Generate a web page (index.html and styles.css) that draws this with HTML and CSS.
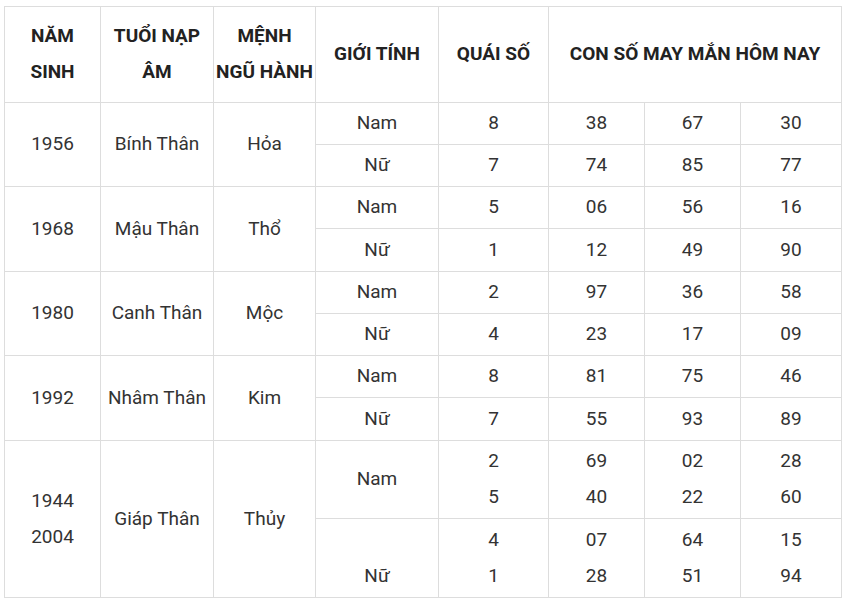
FILE: index.html
```html
<!DOCTYPE html>
<html lang="vi">
<head>
<meta charset="utf-8">
<title>Con số may mắn</title>
<link rel="stylesheet" href="styles.css">
</head>
<body>
<table class="luck">
  <colgroup>
    <col class="c1"><col class="c2"><col class="c3"><col class="c4"><col class="c5"><col class="c6"><col class="c7"><col class="c8">
  </colgroup>
  <thead>
    <tr class="head">
      <th>NĂM<br>SINH</th>
      <th>TUỔI NẠP<br>ÂM</th>
      <th>MỆNH<br>NGŨ HÀNH</th>
      <th>GIỚI TÍNH</th>
      <th>QUÁI SỐ</th>
      <th colspan="3">CON SỐ MAY MẮN HÔM NAY</th>
    </tr>
  </thead>
  <tbody>
    <tr class="r42"><td rowspan="2">1956</td><td rowspan="2">Bính Thân</td><td rowspan="2">Hỏa</td><td>Nam</td><td>8</td><td>38</td><td>67</td><td>30</td></tr>
    <tr class="r42"><td>Nữ</td><td>7</td><td>74</td><td>85</td><td>77</td></tr>
    <tr class="r42"><td rowspan="2">1968</td><td rowspan="2">Mậu Thân</td><td rowspan="2">Thổ</td><td>Nam</td><td>5</td><td>06</td><td>56</td><td>16</td></tr>
    <tr class="r43"><td>Nữ</td><td>1</td><td>12</td><td>49</td><td>90</td></tr>
    <tr class="r42"><td rowspan="2">1980</td><td rowspan="2">Canh Thân</td><td rowspan="2">Mộc</td><td>Nam</td><td>2</td><td>97</td><td>36</td><td>58</td></tr>
    <tr class="r42"><td>Nữ</td><td>4</td><td>23</td><td>17</td><td>09</td></tr>
    <tr class="r42"><td rowspan="2">1992</td><td rowspan="2">Nhâm Thân</td><td rowspan="2">Kim</td><td>Nam</td><td>8</td><td>81</td><td>75</td><td>46</td></tr>
    <tr class="r43"><td>Nữ</td><td>7</td><td>55</td><td>93</td><td>89</td></tr>
    <tr class="r78"><td rowspan="2">1944<br>2004</td><td rowspan="2">Giáp Thân</td><td rowspan="2">Thủy</td><td>Nam</td><td>2<br>5</td><td>69<br>40</td><td>02<br>22</td><td>28<br>60</td></tr>
    <tr class="r79"><td><br>Nữ</td><td>4<br>1</td><td>07<br>28</td><td>64<br>51</td><td>15<br>94</td></tr>
  </tbody>
</table>
</body>
</html>
```

FILE: styles.css
```css
html, body {
  margin: 0;
  padding: 0;
  background: #ffffff;
}
body {
  padding: 6px 0 0 4px;
  font-family: Roboto, "Noto Sans", "Liberation Sans", sans-serif;
  color: #333333;
}
.luck {
  border-collapse: collapse;
  table-layout: fixed;
  width: 837px;
  font-size: 19px;
  line-height: 36px;
}
.c1 { width: 96px; }
.c2 { width: 113px; }
.c3 { width: 102px; }
.c4 { width: 123px; }
.c5 { width: 110px; }
.c6 { width: 96px; }
.c7 { width: 96px; }
.c8 { width: 101px; }
.luck th,
.luck td {
  border: 1px solid #dddddd;
  padding: 0;
  text-align: center;
  vertical-align: middle;
  white-space: nowrap;
}
.luck th {
  font-weight: 700;
  color: #222222;
}
.luck td {
  padding-bottom: 1px;
}
.head th {
  padding-bottom: 2px;
}
.head { height: 96px; }
.r42 { height: 42px; }
.r43 { height: 43px; }
.r78 { height: 78px; }
.r79 { height: 79px; }
```
